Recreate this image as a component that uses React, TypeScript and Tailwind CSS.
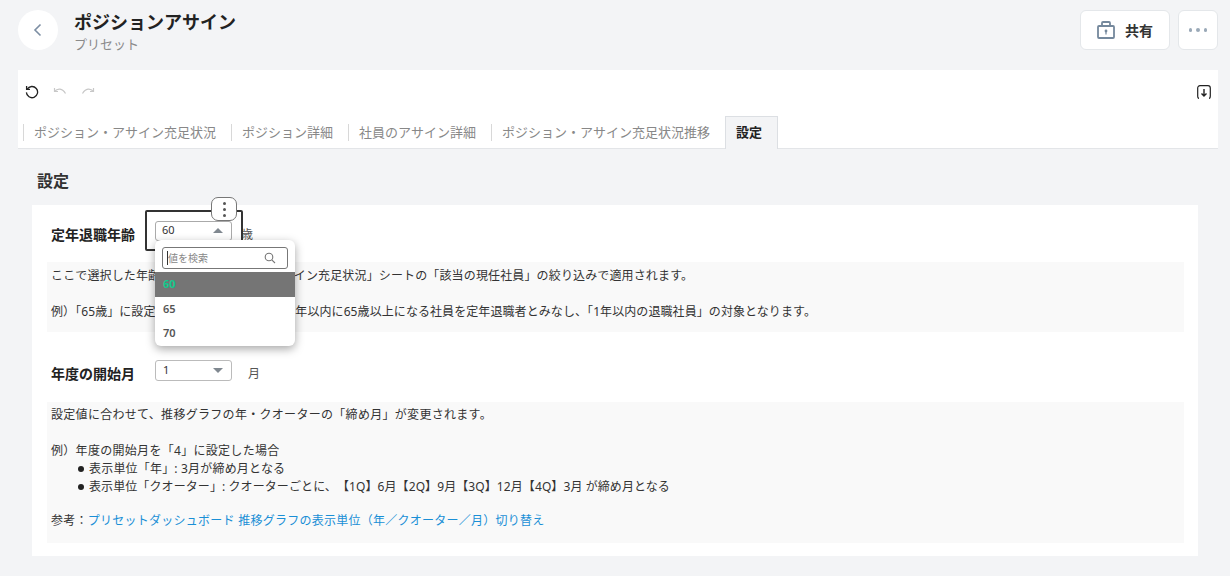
import React from 'react';

const FONT = "font-['Noto_Sans','Noto_Sans_CJK_JP',sans-serif]";

const tabs = ['ポジション・アサイン充足状況', 'ポジション詳細', '社員のアサイン詳細', 'ポジション・アサイン充足状況推移'];

const Caret = ({ up = false }: { up?: boolean }) => (
  <svg width="10" height="5" viewBox="0 0 10 5" className="text-[#808890]">
    <path d={up ? 'M0 5L5 0L10 5Z' : 'M0 0L5 5L10 0Z'} fill="currentColor" />
  </svg>
);

const Dot = () => <span className="inline-block w-[6px] h-[6px] mr-[5px] rounded-full bg-[#222] align-[1px]" />;

const App = () => {
  return (
    <div className={`${FONT} w-[1230px] h-[576px] overflow-hidden bg-[#f3f4f6] text-[#333]`}>
      {/* Header */}
      <header className="h-[70px] pl-[18px] pr-[12px] flex items-start">
        <button className="mt-[10px] w-10 h-10 rounded-full bg-white flex items-center justify-center text-[#7c8ea3]">
          <svg width="16" height="16" viewBox="0 0 16 16" fill="none" stroke="currentColor" strokeWidth="1.6">
            <path d="M10.5 2.5L5 8l5.5 5.5" />
          </svg>
        </button>
        <div className="ml-4 mt-[10px]">
          <h1 className="text-[18px] leading-[24px] font-bold text-[#222]">ポジションアサイン</h1>
          <p className="mt-[1px] text-[13px] leading-[18px] text-[#8a8a8a]">プリセット</p>
        </div>
        <div className="ml-auto mt-[10px] flex gap-2">
          <button className="w-[90px] h-10 rounded-md bg-white border border-[#e4e7ea] flex items-center justify-center gap-[10px] text-[14px] font-bold text-[#333]">
            <svg width="18" height="18" viewBox="0 0 18 18" fill="none" stroke="#74889c" strokeWidth="1.8">
              <rect x="1" y="5" width="16" height="12" rx="1" />
              <path d="M5 5V2a1 1 0 0 1 1-1h6a1 1 0 0 1 1 1v3" />
              <circle cx="9" cy="10" r="1.4" fill="#74889c" stroke="none" />
              <path d="M9 10.500v3" strokeWidth="1.2" />
            </svg>
            共有
          </button>
          <button className="w-10 h-10 rounded-md bg-white border border-[#e4e7ea] flex items-center justify-center gap-[4px]">
            <span className="w-[3.500px] h-[3.500px] rounded-full bg-[#9aa9b8]" />
            <span className="w-[3.500px] h-[3.500px] rounded-full bg-[#9aa9b8]" />
            <span className="w-[3.500px] h-[3.500px] rounded-full bg-[#9aa9b8]" />
          </button>
        </div>
      </header>

      {/* Toolbar and tabs */}
      <section className="ml-[18px] w-[1200px] h-[79px] bg-white border-b border-[#e3e5e8] flex flex-col">
        <div className="h-[46px] px-[7px] pb-[2px] flex items-center">
          <svg width="14" height="14" viewBox="0 0 14 14" fill="none" stroke="#222" strokeWidth="1.3">
            <path d="M2.2 4.2A5.6 5.6 0 1 1 1.4 7.4" />
            <path d="M1.6 1v3.4H5" />
          </svg>
          <svg className="ml-[14px]" width="14" height="10" viewBox="0 0 14 10" fill="none" stroke="#c8c8c8" strokeWidth="1.2">
            <path d="M1.5 1v3.5H5" />
            <path d="M1.5 4.5C4.5 1 9.5 1 12.5 6.5" />
          </svg>
          <svg className="ml-[14px]" width="14" height="10" viewBox="0 0 14 10" fill="none" stroke="#c8c8c8" strokeWidth="1.2">
            <path d="M12.5 1v3.5H9" />
            <path d="M12.5 4.5C9.5 1 4.5 1 1.5 6.5" />
          </svg>
          <svg className="ml-auto -mt-[1px]" width="14" height="14" viewBox="0 0 14 14" fill="none" stroke="#222" strokeWidth="1.2">
            <path d="M3 .7h8c1.3 0 2.3 1 2.3 2.3v8c0 1.3-.4 2.3-1.3 2.3M2 13.300C1.100 13.300.7 12.300.7 11V3C.7 1.700 1.700.7 3 .7" />
            <path d="M7 4v7M4.500 8.500L7 11l2.500-2.500" strokeWidth="1.4" />
          </svg>
        </div>
        <nav className="h-[32px] pl-[5px] flex items-stretch">
          <div className="flex items-center text-[13px] text-[#888] [text-spacing-trim:space-all]">
            {tabs.map((tab) => (
              <span key={tab} className="h-[17px] leading-[17px] pl-[10px] pr-[15px] border-l border-[#d8d8d8] whitespace-nowrap">
                {tab}
              </span>
            ))}
          </div>
          <div className="h-[33px] w-[53px] pl-[10px] bg-[#f3f4f6] border border-b-0 border-[#dcdfe3] flex items-center text-[13px] font-bold text-[#222]">
            設定
          </div>
        </nav>
      </section>

      {/* Settings */}
      <main className="px-[32px]">
        <h2 className="pl-[5px] pt-[20px] pb-[12px] text-[16px] leading-[24px] font-bold text-[#333]">設定</h2>
        <div className="relative h-[351px] bg-white pl-[15px] pr-[14px]">
          <div className="relative h-[57px] flex items-center pl-[4px] pt-[4px]">
            <span className="w-[104px] -mt-[2px] text-[14px] font-bold text-[#222]">定年退職年齢</span>
            <div className="w-[77px] h-[20px] -mt-[10px] rounded-[3px] border border-[#aaa] bg-white flex items-center justify-between pl-[6px] pr-[8px] text-[11px]">
              60
              <Caret up />
            </div>
            <span className="ml-[9px] -mt-[2px] text-[12px] text-[#555]">歳</span>
            {/* Selected cell outline */}
            <div className="absolute left-[98px] top-[5px] w-[98px] h-[41px] rounded-[2px] border-2 border-[#333]" />
          </div>

          <div className="h-[70px] bg-[#f9f9f9] pl-[4px] pt-[5px] text-[12px] leading-[18px] text-[#333]">
            <p className="tracking-[0.14px] [text-spacing-trim:space-all]">ここで選択した年齢は、「ポジション・アサイン充足状況」シートの「該当の現任社員」の絞り込みで適用されます。</p>
            <p className="mt-[18px] tracking-[0.08px] [text-spacing-trim:normal]">例）「65歳」に設定した場合、集計時点から1年以内に65歳以上になる社員を定年退職者とみなし、「1年以内の退職社員」の対象となります。</p>
          </div>

          <div className="h-[70px] pt-[13px] flex items-center pl-[4px]">
            <span className="w-[104px] text-[14px] font-bold text-[#222]">年度の開始月</span>
            <div className="w-[77px] h-[21px] -mt-[6px] rounded-[3px] border border-[#bbb] bg-white flex items-center justify-between pl-[7px] pr-[8px] text-[11px]">
              <span>1</span>
              <Caret />
            </div>
            <span className="ml-[16px] text-[12px] text-[#555]">月</span>
          </div>

          <div className="h-[141px] bg-[#f9f9f9] pl-[4px] pt-[4px] text-[12px] leading-[18px] text-[#333] [text-spacing-trim:space-all]">
            <p className="tracking-[0.3px]">設定値に合わせて、推移グラフの年・クオーターの「締め月」が変更されます。</p>
            <p className="mt-[18px] tracking-[0.3px]">例）年度の開始月を「4」に設定した場合</p>
            <p className="pl-[27px] tracking-[0.19px]"><Dot />表示単位「年」: 3月が締め月となる</p>
            <p className="pl-[27px] tracking-[0.09px]"><Dot />表示単位「クオーター」: クオーターごとに、【1Q】6月【2Q】9月【3Q】12月【4Q】3月 が締め月となる</p>
            <p className="mt-[16px] tracking-[0.25px]">
              参考：<a className="text-[#1a8fd6]">プリセットダッシュボード 推移グラフの表示単位（年／クオーター／月）切り替え</a>
            </p>
          </div>

          {/* Kebab button over the cell */}
          <button className="absolute left-[179px] -top-[8px] w-[26px] h-[24px] rounded-[7px] bg-white border border-[#777] flex flex-col items-center justify-center gap-[3px]">
            <span className="w-[3px] h-[3px] rounded-full bg-[#555]" />
            <span className="w-[3px] h-[3px] rounded-full bg-[#555]" />
            <span className="w-[3px] h-[3px] rounded-full bg-[#555]" />
          </button>

          {/* Dropdown */}
          <div className="absolute left-[123px] top-[35px] w-[140px] h-[106px] rounded-[6px] bg-white shadow-[0_3px_10px_rgba(0,0,0,0.35)] overflow-hidden">
            <div className="h-[32px] px-[7px] pt-[7px]">
              <div className="relative h-[22px] rounded-[3px] border border-[#777] flex items-center pl-[4px] text-[10px] text-[#888]">
                <span className="w-px h-[14px] bg-[#333]" />
                値を検索
                <svg className="absolute right-[11px] top-[4px]" width="12" height="12" viewBox="0 0 12 12" fill="none" stroke="#777" strokeWidth="1.1">
                  <circle cx="5" cy="5" r="3.8" />
                  <path d="M7.800 7.800L11 11" />
                </svg>
              </div>
            </div>
            <div className="h-[25px] bg-[#757575] pl-[8px] flex items-center text-[11px] font-bold text-[#13c98d]">60</div>
            <div className="h-[24px] pl-[8px] flex items-center text-[11px] font-semibold text-[#555]">65</div>
            <div className="h-[25px] pl-[8px] flex items-center text-[11px] font-semibold text-[#555]">70</div>
          </div>
        </div>
      </main>
    </div>
  );
};

export default App;
